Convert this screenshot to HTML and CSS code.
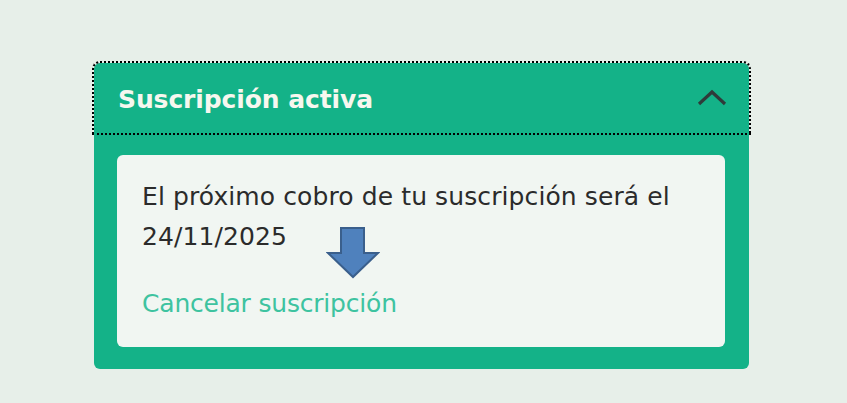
FILE: index.html
```html
<!DOCTYPE html>
<html lang="es">
<head>
<meta charset="utf-8">
<link rel="stylesheet" href="styles.css">
</head>
<body>
<div class="card">
  <button class="card-header" type="button">
    <span class="title">Suscripción activa</span>
    <svg class="chevron" width="30" height="18" viewBox="0 0 30 18"><path d="M2 16 L15 4 L28 16" fill="none" stroke="#2f3b3a" stroke-width="3.2"/></svg>
  </button>
  <div class="panel">
    <p class="info">El próximo cobro de tu suscripción será el 24/11/2025</p>
    <a class="cancel" href="#">Cancelar suscripción</a>
    <svg class="arrow" width="54" height="54" viewBox="0 0 54 54"><polygon points="15,2 38,2 38,27 52,27 27,51 2,27 15,27" fill="#4f81bd" stroke="#3a5f8c" stroke-width="2"/></svg>
  </div>
</div>
</body>
</html>
```
FILE: styles.css
```css
html, body { margin: 0; padding: 0; }
body {
  background: #e7efe9;
  width: 847px;
  height: 403px;
  overflow: hidden;
  font-family: "DejaVu Sans", Verdana, sans-serif;
}
.card {
  margin: 63px 0 0 94px;
  width: 655px;
  height: 306px;
  box-sizing: border-box;
  background: #14b288;
  border-radius: 6px;
  display: flex;
  flex-direction: column;
}
.card-header {
  display: flex;
  align-items: center;
  justify-content: space-between;
  height: 70px;
  padding: 2px 22px 0 24px;
  border: 0;
  background: transparent;
  outline: 2px dotted #000;
  outline-offset: 0;
  font: inherit;
  cursor: pointer;
  border-radius: 6px 6px 0 0;
}
.title {
  color: #f7f7ef;
  font-weight: bold;
  font-size: 25px;
  letter-spacing: -0.1px;
}
.chevron { margin-top: -4px; }
.panel {
  position: relative;
  margin: 22px 24px 22px 23px;
  flex: 1;
  background: #f1f6f2;
  border-radius: 6px;
  padding: 22px 25px;
}
.info {
  margin: 0;
  color: #2b2b2b;
  font-size: 25px;
  line-height: 40px;
  width: 545px;
  letter-spacing: 0.1px;
}
.cancel {
  display: block;
  margin-top: 27px;
  color: #3ec3a0;
  font-size: 25px;
  line-height: 40px;
  text-decoration: none;
  letter-spacing: -0.2px;
}
.arrow {
  position: absolute;
  left: 209px;
  top: 71px;
}
```
